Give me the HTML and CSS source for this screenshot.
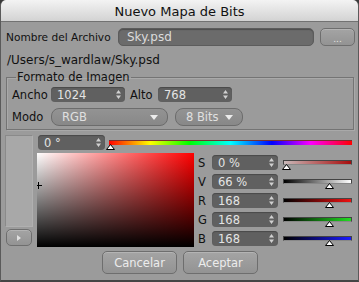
FILE: index.html
```html
<!DOCTYPE html>
<html>
<head>
<meta charset="utf-8">
<link rel="stylesheet" href="styles.css">
</head>
<body>
<div class="win">
  <div class="titlebar">Nuevo Mapa de Bits</div>
  <div class="content">
    <div class="name-row">
      <span class="name-label">Nombre del Archivo</span>
      <div class="textfield">Sky.psd</div>
      <div class="btn dots">...</div>
    </div>
    <div class="path">/Users/s_wardlaw/Sky.psd</div>
    <fieldset class="group">
      <legend>Formato de Imagen</legend>
      <div class="grow">
        <span class="glabel">Ancho</span>
        <div class="spin w74"><span>1024</span><svg class="arr" width="5" height="9" viewBox="0 0 5 9"><path d="M0 3.6L2.5 0 5 3.6Z M0 5.4L5 5.4 2.5 9Z"/></svg></div>
        <span class="glabel alto">Alto</span>
        <div class="spin w74"><span>768</span><svg class="arr" width="5" height="9" viewBox="0 0 5 9"><path d="M0 3.6L2.5 0 5 3.6Z M0 5.4L5 5.4 2.5 9Z"/></svg></div>
      </div>
      <div class="grow mrow">
        <span class="glabel">Modo</span>
        <div class="drop w117"><span>RGB</span><svg class="darr" width="8" height="5" viewBox="0 0 8 5"><path d="M0 0L8 0 4 5Z"/></svg></div>
        <div class="drop w68"><span>8 Bits</span><svg class="darr" width="8" height="5" viewBox="0 0 8 5"><path d="M0 0L8 0 4 5Z"/></svg></div>
      </div>
    </fieldset>
    <div class="picker">
      <div class="leftcol">
        <div class="swatch"></div>
        <div class="btn tiny"><svg width="4" height="6" viewBox="0 0 4 6"><path d="M0 0L4 3 0 6Z"/></svg></div>
      </div>
      <div class="main">
        <div class="huerow">
          <div class="spin hue"><span>0 °</span><svg class="arr" width="5" height="9" viewBox="0 0 5 9"><path d="M0 3.6L2.5 0 5 3.6Z M0 5.4L5 5.4 2.5 9Z"/></svg></div>
          <div class="huebar"><svg class="mark" style="left:-3px" width="9" height="6" viewBox="0 0 9 6"><path d="M4.5 0.5L8.5 5.5 0.5 5.5Z"/></svg></div>
        </div>
        <div class="lower">
          <div class="square"><svg class="cross" width="5" height="7" viewBox="0 0 5 7"><path d="M0 3.5H5M1.5 0V7"/></svg></div>
          <div class="sliders">
            <div class="srow"><span class="sl">S</span><div class="spin w66"><span>0 %</span><svg class="arr" width="5" height="9" viewBox="0 0 5 9"><path d="M0 3.6L2.5 0 5 3.6Z M0 5.4L5 5.4 2.5 9Z"/></svg></div><div class="bar bs"><svg class="mark" style="left:-2px" width="9" height="6" viewBox="0 0 9 6"><path d="M4.5 0.5L8.5 5.5 0.5 5.5Z"/></svg></div></div>
            <div class="srow"><span class="sl">V</span><div class="spin w66"><span>66 %</span><svg class="arr" width="5" height="9" viewBox="0 0 5 9"><path d="M0 3.6L2.5 0 5 3.6Z M0 5.4L5 5.4 2.5 9Z"/></svg></div><div class="bar bv"><svg class="mark" style="left:41px" width="9" height="6" viewBox="0 0 9 6"><path d="M4.5 0.5L8.5 5.5 0.5 5.5Z"/></svg></div></div>
            <div class="srow"><span class="sl">R</span><div class="spin w66"><span>168</span><svg class="arr" width="5" height="9" viewBox="0 0 5 9"><path d="M0 3.6L2.5 0 5 3.6Z M0 5.4L5 5.4 2.5 9Z"/></svg></div><div class="bar br"><svg class="mark" style="left:41px" width="9" height="6" viewBox="0 0 9 6"><path d="M4.5 0.5L8.5 5.5 0.5 5.5Z"/></svg></div></div>
            <div class="srow"><span class="sl">G</span><div class="spin w66"><span>168</span><svg class="arr" width="5" height="9" viewBox="0 0 5 9"><path d="M0 3.6L2.5 0 5 3.6Z M0 5.4L5 5.4 2.5 9Z"/></svg></div><div class="bar bg"><svg class="mark" style="left:41px" width="9" height="6" viewBox="0 0 9 6"><path d="M4.5 0.5L8.5 5.5 0.5 5.5Z"/></svg></div></div>
            <div class="srow"><span class="sl">B</span><div class="spin w66"><span>168</span><svg class="arr" width="5" height="9" viewBox="0 0 5 9"><path d="M0 3.6L2.5 0 5 3.6Z M0 5.4L5 5.4 2.5 9Z"/></svg></div><div class="bar bb"><svg class="mark" style="left:41px" width="9" height="6" viewBox="0 0 9 6"><path d="M4.5 0.5L8.5 5.5 0.5 5.5Z"/></svg></div></div>
          </div>
        </div>
      </div>
    </div>
    <div class="buttons">
      <div class="btn big">Cancelar</div>
      <div class="btn big">Aceptar</div>
    </div>
  </div>
</div>
</body>
</html>
```

FILE: styles.css
```css
html, body {
  margin: 0;
  padding: 0;
  background: #3a3a3a;
  width: 359px;
  height: 282px;
  overflow: hidden;
}
.win {
  width: 359px;
  height: 282px;
  box-sizing: border-box;
  background: #9b9b9b;
  border-left: 1px solid #5a5a5a;
  border-right: 1px solid #5a5a5a;
  border-bottom: 2px solid #454545;
  border-radius: 6px 6px 0 0;
  overflow: hidden;
  font-family: "DejaVu Sans", sans-serif;
  font-size: 11.5px;
  color: #111;
  white-space: nowrap;
}
.titlebar {
  height: 22px;
  box-sizing: border-box;
  border-bottom: 1px solid #727272;
  background: linear-gradient(#f3f3f3, #d3d3d3);
  display: flex;
  align-items: center;
  justify-content: center;
  font-size: 13px;
  color: #111;
  padding-top: 1px;
}
.content {
  padding: 6px 3px 0 5px;
}
.name-row {
  display: flex;
  align-items: center;
  height: 18px;
}
.name-label {
  width: 112px;
  flex: none;
  font-size: 10.6px;
}
.textfield {
  width: 196px;
  height: 18px;
  box-sizing: border-box;
  border-radius: 5px;
  background: #6b6b6b;
  border: 1px solid #5c5c5c;
  box-shadow: inset 0 1px 1px #4e4e4e;
  color: #dcdcdc;
  padding-left: 8px;
  line-height: 16px;
  font-size: 12px;
}
.btn {
  box-sizing: border-box;
  border: 1px solid #6e6e6e;
  border-radius: 5px;
  background: linear-gradient(#a4a4a4, #939393);
  box-shadow: inset 0 1px 0 #b4b4b4;
  color: #e6e6e6;
  display: flex;
  align-items: center;
  justify-content: center;
}
.dots {
  width: 35px;
  height: 18px;
  margin-left: 6px;
  font-size: 9px;
  padding-top: 4px;
}
.path {
  margin-top: 6px;
  height: 16px;
  line-height: 16px;
  padding-left: 1px;
  font-size: 12px;
}
.group {
  margin: 2px 0 0 0;
  width: 348px;
  box-sizing: border-box;
  border: 1px solid #747474;
  box-shadow: inset 1px 1px 0 #a9a9a9, 1px 1px 0 #a9a9a9;
  padding: 3px 4px 3px 5px;
}
.group legend {
  padding: 0 1px;
  margin-left: 4px;
  line-height: 14px;
}
.grow {
  display: flex;
  align-items: center;
  height: 15px;
}
.mrow {
  height: 18px;
  margin-top: 6px;
}
.glabel {
  width: 39px;
  flex: none;
}
.glabel.alto {
  width: 28px;
  margin-left: 5px;
}
.spin {
  height: 15px;
  box-sizing: border-box;
  border-radius: 4px;
  background: #606060;
  box-shadow: inset 0 1px 1px #4a4a4a;
  color: #e4e4e4;
  display: flex;
  align-items: center;
  justify-content: space-between;
  padding: 0 4px 0 6px;
  flex: none;
}
.arr {
  fill: #d0d0d0;
}
.w74 { width: 74px; }
.w66 { width: 66px; }
.w117 { width: 117px; }
.w68 { width: 68px; margin-left: 7px; }
.drop {
  height: 18px;
  box-sizing: border-box;
  border-radius: 8px;
  border: 1px solid #6c6c6c;
  background: linear-gradient(#939393, #888888);
  color: #e0e0e0;
  display: flex;
  align-items: center;
  justify-content: space-between;
  padding: 0 9px 0 10px;
  flex: none;
}
.darr {
  fill: #ececec;
}
.picker {
  display: flex;
  margin-top: 5px;
}
.leftcol {
  width: 28px;
  margin-left: -1px;
  display: flex;
  flex-direction: column;
}
.swatch {
  height: 92px;
  box-sizing: border-box;
  background: #a8a8a8;
  border: 1px solid #8a8a8a;
  border-right-color: #b0b0b0;
  border-bottom-color: #b0b0b0;
}
.tiny {
  width: 26px;
  height: 17px;
  margin: 2px 0 0 1px;
  fill: #e0e0e0;
}
.main {
  width: 315px;
  margin-left: 4px;
}
.huerow {
  display: flex;
  align-items: center;
  height: 15px;
}
.hue {
  width: 67px;
  margin-left: 1px;
}
.huebar {
  position: relative;
  margin-left: 4px;
  width: 243px;
  height: 5px;
  box-sizing: border-box;
  border-top: 1px solid #7a3030;
  background: linear-gradient(to right, #ff0000 0%, #ffff00 17%, #00ff00 33%, #00ffff 50%, #0000ff 67%, #ff00ff 83%, #ff0000 100%);
}
.mark {
  position: absolute;
  top: 3px;
  fill: #fff;
  stroke: #000;
  stroke-width: 1;
}
.lower {
  display: flex;
  margin-top: 3px;
}
.square {
  position: relative;
  width: 157px;
  height: 94px;
  background: linear-gradient(rgba(0,0,0,0), #000), linear-gradient(to right, #fff, #f00);
}
.cross {
  position: absolute;
  left: 0;
  top: 29px;
  stroke: #000;
  stroke-width: 1;
}
.sliders {
  margin-left: 4px;
  padding-top: 2px;
  display: flex;
  flex-direction: column;
  gap: 4px;
}
.srow {
  display: flex;
  align-items: center;
  height: 15px;
}
.sl {
  width: 14px;
  flex: none;
}
.bar {
  position: relative;
  margin-left: 5px;
  width: 69px;
  height: 5px;
  box-sizing: border-box;
  border: 1px solid #444;
  border-bottom-color: #888;
}
.bs { background: linear-gradient(to right, #c9b9b9, #a80d0d); }
.bv { background: linear-gradient(to right, #000, #fff); }
.br { background: linear-gradient(to right, #000, #ee1111); }
.bg { background: linear-gradient(to right, #000, #22dd22); }
.bb { background: linear-gradient(to right, #000, #1a1aff); }
.buttons {
  display: flex;
  justify-content: center;
  gap: 6px;
  margin-top: 4px;
  margin-right: 1px;
}
.big {
  width: 75px;
  height: 23px;
  font-size: 11.5px;
  color: #ececec;
}
```
